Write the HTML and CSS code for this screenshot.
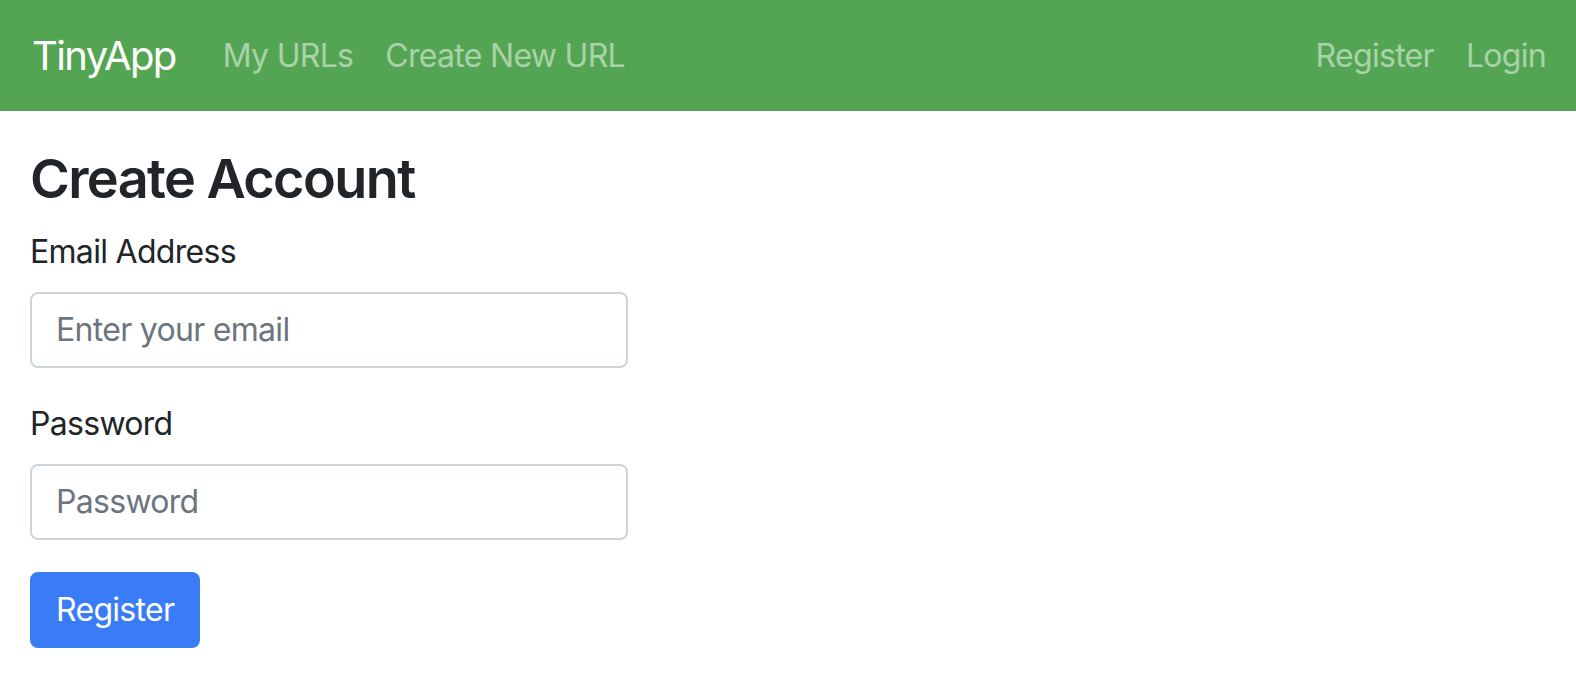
FILE: index.html
```html
<!DOCTYPE html>
<html lang="en">
<head>
<meta charset="utf-8">
<title>TinyApp - Create Account</title>
<link rel="stylesheet" href="styles.css">
</head>
<body>
<nav class="navbar">
  <a class="brand" href="#">TinyApp</a>
  <ul class="nav nav-main">
    <li><a class="nav-link" href="#">My URLs</a></li>
    <li><a class="nav-link" href="#">Create New URL</a></li>
  </ul>
  <ul class="nav nav-right">
    <li><a class="nav-link" href="#">Register</a></li>
    <li><a class="nav-link" href="#">Login</a></li>
  </ul>
</nav>
<main class="container">
  <h3 class="title">Create Account</h3>
  <form class="form">
    <div class="form-group">
      <label class="label" for="email">Email Address</label>
      <input class="control" id="email" type="email" placeholder="Enter your email">
    </div>
    <div class="form-group">
      <label class="label" for="password">Password</label>
      <input class="control" id="password" type="password" placeholder="Password">
    </div>
    <button class="btn" type="submit">Register</button>
  </form>
</main>
</body>
</html>
```
FILE: styles.css
```css
* { box-sizing: border-box; }
html, body { margin: 0; padding: 0; }
body {
  font-family: Inter, "Noto Sans", sans-serif;
  font-size: 32px;
  line-height: 1.5;
  letter-spacing: -0.7px;
  color: #212529;
  background: #fff;
}
a { text-decoration: none; }
.navbar {
  display: flex;
  align-items: center;
  height: 111px;
  padding: 0 14px 0 32px;
  background: #54a553;
}
.brand {
  font-size: 40px;
  line-height: 60px;
  letter-spacing: -1.6px;
  color: #fff;
  margin-right: 31px;
}
.nav {
  display: flex;
  list-style: none;
  margin: 0;
  padding: 0;
}
.nav-right { margin-left: auto; }
.nav-link {
  display: block;
  padding: 0 16px;
  font-size: 32px;
  color: rgba(255, 255, 255, 0.5);
}
.container {
  padding: 0 30px;
  margin-top: 36px;
}
.title {
  margin: 0 0 16px;
  font-size: 54px;
  font-weight: 600;
  letter-spacing: -1.6px;
  line-height: 1.2;
}
.form { width: 598px; }
.form-group { margin-bottom: 32px; }
.label {
  display: block;
  margin-bottom: 16px;
}
.control {
  display: block;
  width: 100%;
  height: 76px;
  padding: 12px 24px;
  font: inherit;
  letter-spacing: inherit;
  color: #495057;
  border: 2px solid #ced4da;
  border-radius: 8px;
  background: #fff;
}
.control::placeholder { color: #6c757d; opacity: 1; }
.btn {
  display: block;
  height: 76px;
  padding: 0 24px;
  font: inherit;
  letter-spacing: inherit;
  color: #fff;
  background: #397cf6;
  border: 2px solid #397cf6;
  border-radius: 8px;
}
```
